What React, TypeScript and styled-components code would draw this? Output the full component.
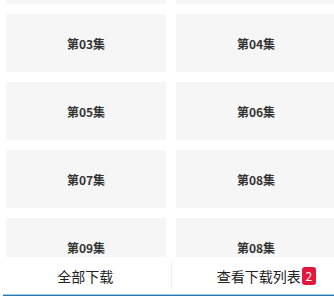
import React, { useLayoutEffect, useRef } from 'react';
import styled, { createGlobalStyle } from 'styled-components';

const episodes = ['01', '02', '03', '04', '05', '06', '07', '08', '09', '08'];

const GlobalStyle = createGlobalStyle`
    html, body {
        margin: 0;
        padding: 0;
        overflow: hidden;
        background: #fff;
        font-family: "Noto Sans CJK SC", Roboto, "Liberation Sans", sans-serif;
    }
`;

const App = () => {
    const listRef = useRef<HTMLDivElement>(null);

    useLayoutEffect(() => {
        if (listRef.current) listRef.current.scrollTop = 64;
    }, []);

    return (
        <>
            <GlobalStyle />
            <Page>
                <List ref={listRef}>
                    <Grid>
                        {episodes.map((num, i) => (
                            <Card key={i}>第{num}集</Card>
                        ))}
                    </Grid>
                </List>
                <Footer>
                    <ButtonRow>
                        <FooterButton>全部下载</FooterButton>
                        <Divider />
                        <FooterButton>
                            <Label>
                                查看下载列表
                                <Badge>2</Badge>
                            </Label>
                        </FooterButton>
                    </ButtonRow>
                    <BottomLine />
                </Footer>
            </Page>
        </>
    );
};

const Page = styled.div`
    width: 342px;
    height: 302px;
    display: flex;
    flex-direction: column;
    background: #fff;
`;

const List = styled.div`
    flex: 1;
    overflow-y: scroll;
    scrollbar-width: none;

    &::-webkit-scrollbar {
        display: none;
    }
`;

const Grid = styled.div`
    display: grid;
    grid-template-columns: 160px 160px;
    gap: 10px;
    padding: 10px 6px;
`;

const Card = styled.div`
    height: 58px;
    display: flex;
    align-items: center;
    justify-content: center;
    background: #f6f6f6;
    color: #333;
    font-size: 12px;
    font-weight: bold;
`;

const Footer = styled.div`
    height: 45px;
    display: flex;
    flex-direction: column;
    background: #fff;
`;

const ButtonRow = styled.div`
    height: 37px;
    display: flex;
    align-items: center;
`;

const FooterButton = styled.div`
    flex: 1;
    height: 100%;
    display: flex;
    align-items: center;
    justify-content: center;
    font-size: 14px;
    color: #222;
`;

const Divider = styled.div`
    width: 1px;
    height: 29px;
    background: #f0f0f0;
`;

const Label = styled.span`
    position: relative;
    margin-left: 4px;
`;

const Badge = styled.span`
    position: absolute;
    left: calc(100% + 1px);
    top: 50%;
    transform: translateY(-50%);
    width: 14px;
    height: 18px;
    border-radius: 3px;
    background: #e3173e;
    color: #fff;
    font-size: 12px;
    line-height: 18px;
    text-align: center;
`;

const BottomLine = styled.div`
    height: 1px;
    margin-left: 3px;
    border-top: 1px solid #8fd0ec;
    background: #2f74ad;
`;

export default App;
